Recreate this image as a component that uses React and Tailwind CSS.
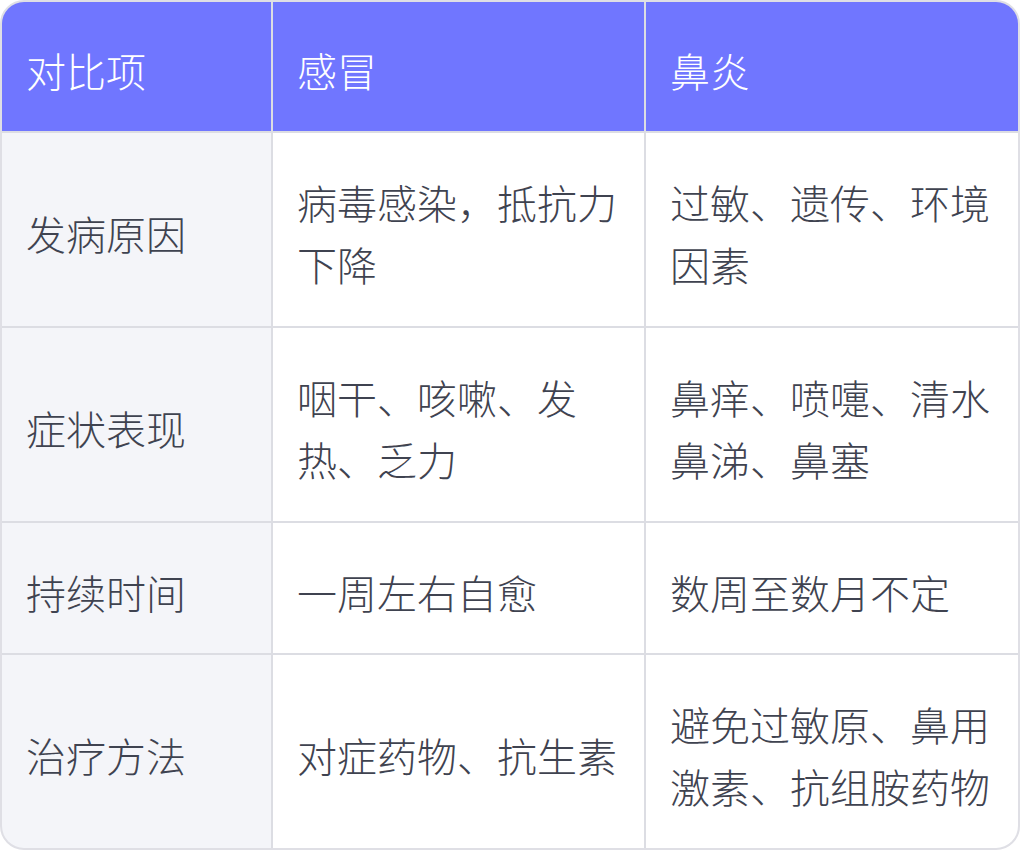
export default function App() {
  const rows = [
    ["发病原因", "病毒感染，抵抗力下降", "过敏、遗传、环境因素"],
    ["症状表现", "咽干、咳嗽、发热、乏力", "鼻痒、喷嚏、清水鼻涕、鼻塞"],
    ["持续时间", "一周左右自愈", "数周至数月不定"],
    ["治疗方法", "对症药物、抗生素", "避免过敏原、鼻用激素、抗组胺药物"],
  ];
  const cell = "px-6 pt-[7px] flex items-center";
  return (
    <div
      className="w-[1020px] h-[850px] bg-white"
      style={{ fontFamily: '"Noto Sans CJK SC", "Noto Sans", sans-serif' }}
    >
      <div className="w-[1020px] h-[850px] rounded-[24px] border-2 border-[#dfdfe5] overflow-hidden bg-[#dcdde3] grid grid-cols-[269px_371px_1fr] grid-rows-[129px_193px_193px_130px_193px] gap-[2px] text-[40px] leading-[62px] font-light text-[#3f4350]">
        <div className={`${cell} bg-[#7076ff] text-white`}>对比项</div>
        <div className={`${cell} bg-[#7076ff] text-white`}>感冒</div>
        <div className={`${cell} bg-[#7076ff] text-white`}>鼻炎</div>
        {rows.map((r, i) => (
          <>
            <div key={`a${i}`} className={`${cell} bg-[#f4f5f9]`}>{r[0]}</div>
            <div key={`b${i}`} className={`${cell} bg-white`}>{r[1]}</div>
            <div key={`c${i}`} className={`${cell} bg-white`}>{r[2]}</div>
          </>
        ))}
      </div>
    </div>
  );
}
